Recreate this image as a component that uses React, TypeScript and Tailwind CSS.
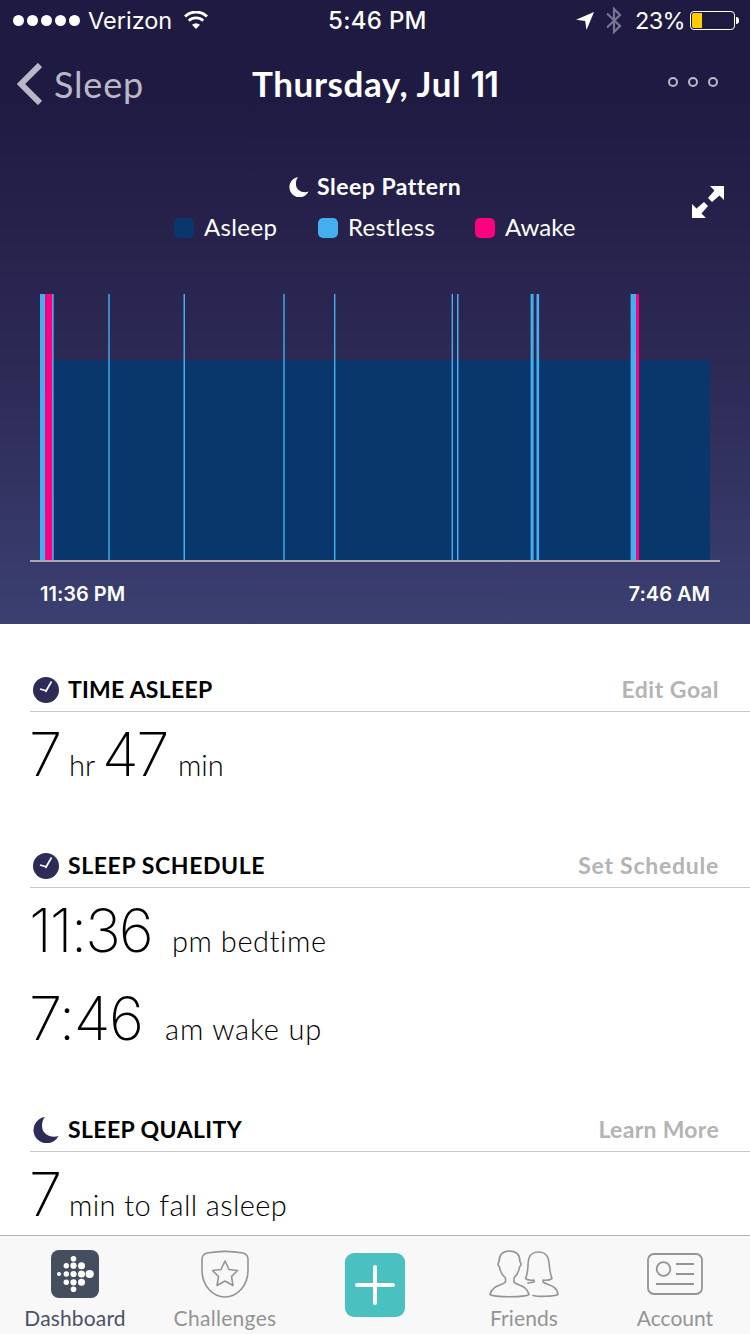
import type { ReactNode } from "react";
import clsx from "clsx";

type Bar = {
  x: number;
  width: number;
  state: "restless" | "awake";
};

const stateColors = {
  asleep: "#0a376b",
  restless: "#44aef0",
  awake: "#ff0080",
};

// Positions are relative to the left edge of the axis
const bars: Bar[] = [
  { x: 10, width: 5.2, state: "restless" },
  { x: 22, width: 1.7, state: "restless" },
  { x: 15.1, width: 7, state: "awake" },
  { x: 78.3, width: 1.4, state: "restless" },
  { x: 153.5, width: 1.5, state: "restless" },
  { x: 253.3, width: 1.4, state: "restless" },
  { x: 304, width: 1.4, state: "restless" },
  { x: 421.6, width: 1.4, state: "restless" },
  { x: 427, width: 1.5, state: "restless" },
  { x: 500.6, width: 3, state: "restless" },
  { x: 506.5, width: 2.6, state: "restless" },
  { x: 600.6, width: 5.5, state: "restless" },
  { x: 606, width: 3, state: "awake" },
];

const legend = [
  { label: "Asleep", swatch: "bg-[#0a376b]", text: "w-[72px] tracking-[0.35px]" },
  { label: "Restless", swatch: "bg-[#44aef0]", text: "w-[85px] tracking-[0.25px]" },
  { label: "Awake", swatch: "bg-[#ff0080]", text: "w-[71px]" },
];

const MoonIcon = ({ className }: { className?: string }) => (
  <svg viewBox="1 0 25 26" className={className} fill="currentColor">
    <path d="M12.500 0A13.200 13.200 0 1 0 26 19C18 21.500 9.500 17 9.500 9C9.500 5 10.500 2 12.500 0Z" />
  </svg>
);

const ClockIcon = () => (
  <svg viewBox="0 0 26 26" className="size-[26px] text-[#2d2b58]">
    <circle cx="13" cy="13" r="13" fill="currentColor" />
    <path d="M7 12L14 14M12.500 15L18.500 4.500" stroke="white" strokeWidth="1.700" fill="none" />
  </svg>
);

const StatusBar = () => (
  <div className="flex h-10 items-center pt-px pl-[13px] font-['Inter',sans-serif] text-[24px]">
    <div className="flex w-[67px] gap-[3px]">
      {[0, 1, 2, 3, 4].map((dot) => (
        <span key={dot} className="size-[11px] rounded-full bg-white" />
      ))}
    </div>
    <span className="ml-[8px] w-[86px] text-[23.500px]">Verizon</span>
    <svg viewBox="0 0 24 18" className="mb-px ml-[10px] h-[18px] w-6" fill="none" stroke="white">
      <path d="M1 5.500A16 16 0 0 1 23 5.500" strokeWidth="3" />
      <path d="M4.800 9.700A10.500 10.500 0 0 1 19.200 9.700" strokeWidth="2.700" />
      <path d="M12 18L8 13.800Q12 10.800 16 13.800Z" fill="white" stroke="none" />
    </svg>
    <span className="ml-[120px] w-[100px] font-medium tracking-[0.3px]">5:46 PM</span>
    <svg viewBox="0 0 18 18" className="ml-[148px] size-[18px]" fill="white">
      <path d="M18 0L10.500 18L9.200 9L0 7.700Z" />
    </svg>
    <svg viewBox="0 0 16 27" className="ml-3 h-[27px] w-4" fill="none" stroke="#787594" strokeWidth="2.200">
      <path d="M1 6.500L14 19L8 25V2L14 8L1 20.500" />
    </svg>
    <span className="ml-[13px] w-[50px] text-[23.500px] tracking-[-0.7px]">23%</span>
    <div className="ml-[5px] h-[19px] w-[45px] rounded-[4px] border border-white p-px">
      <div className="h-full w-[10px] rounded-l-[2px] bg-[#ffcc00]" />
    </div>
    <span className="ml-px h-[7px] w-[3px] rounded-r-full bg-white" />
  </div>
);

const NavBar = () => (
  <nav className="grid h-[88px] grid-cols-[1fr_250px_1fr] items-center">
    <div className="flex items-center text-[#bab7c7]">
      <svg viewBox="0 0 26 42" className="ml-[16px] h-[42px] w-[26px]" fill="none" stroke="currentColor" strokeWidth="6">
        <path d="M24 2L5 21L24 40" />
      </svg>
      <span className="ml-[12px] text-[36px] leading-[52px] tracking-[0.8px]">Sleep</span>
    </div>
    <h1 className="text-center text-[35px] font-bold tracking-[0.6px] whitespace-nowrap">
      Thursday, Jul <span className="font-['Inter',sans-serif] font-semibold tracking-[-1px]">11</span>
    </h1>
    <div className="mb-1 flex justify-end gap-[10px] pr-8">
      {[0, 1, 2].map((dot) => (
        <span key={dot} className="size-[10px] rounded-full border-2 border-[#bab7c7]" />
      ))}
    </div>
  </nav>
);

const SleepChart = () => (
  <svg viewBox="0 0 690 268" className="mx-[30px] h-[268px] w-[690px]">
    <rect x="24" y="66.300" width="656" height="199.700" fill={stateColors.asleep} />
    {bars.map((bar) => (
      <rect key={bar.x} x={bar.x} y="0" width={bar.width} height="266" fill={stateColors[bar.state]} />
    ))}
    <rect x="0" y="266" width="690" height="2" fill="#aaa8ae" />
  </svg>
);

const SleepPattern = () => (
  <div className="relative">
    <div className="flex h-[36px] items-center justify-center text-[23px] font-bold">
      <MoonIcon className="mt-px mr-2 size-5" />
      <span className="w-[144px] tracking-[0.5px] whitespace-nowrap">Sleep Pattern</span>
    </div>
    <div className="mt-[5px] flex h-[36px] items-center justify-center gap-[42px] text-[24px]">
      {legend.map((item) => (
        <div key={item.label} className="flex items-center gap-[10px]">
          <span className={clsx("mt-px size-5 rounded-[5px]", item.swatch)} />
          <span className={item.text}>{item.label}</span>
        </div>
      ))}
    </div>
    <svg viewBox="0 0 32 32" className="absolute top-[18px] left-[692px] size-8" fill="white">
      <path d="M18 0H32V14L27.500 9.500L20 16L16 12L22.500 4.500ZM14 32H0V18L4.500 22.500L12 16L16 20L9.500 27.500Z" />
    </svg>
  </div>
);

type SectionProps = {
  icon: ReactNode;
  title: string;
  titleClass: string;
  action: string;
  actionClass: string;
  children: ReactNode;
};

const Section = ({ icon, title, titleClass, action, actionClass, children }: SectionProps) => (
  <section className="mt-11">
    <div className="ml-[30px] flex h-11 items-center border-b border-[#c8c8c8] pr-[31px] pl-[3px] text-[23px] font-bold">
      {icon}
      <h2 className={clsx("ml-[9px]", titleClass)}>{title}</h2>
      <span className={clsx("ml-auto text-[#b4b4b4]", actionClass)}>{action}</span>
    </div>
    {children}
  </section>
);

const Value = ({ children }: { children: ReactNode }) => (
  <div className="flex h-[88px] items-baseline pl-[29px] leading-[84px] font-light whitespace-nowrap">
    {children}
  </div>
);

const Digits = ({ children, className }: { children: string; className?: string }) => (
  <span className={clsx("font-['Inter',sans-serif] text-[60px] font-[250]", className)}>{children}</span>
);

const Unit = ({ children, className }: { children: string; className?: string }) => (
  <span className={clsx("text-[29px]", className)}>{children}</span>
);

const DashboardIcon = () => (
  <svg viewBox="0 0 48 48" className="size-12">
    <rect width="48" height="48" rx="8" fill="#454e5f" />
    <g fill="white">
      <circle cx="8" cy="24" r="2" />
      <circle cx="15.300" cy="15.700" r="2.700" />
      <circle cx="15.300" cy="24" r="2.700" />
      <circle cx="15.300" cy="32.300" r="2.700" />
      <circle cx="22.500" cy="8.800" r="2.800" />
      <circle cx="22.500" cy="15.700" r="3.100" />
      <circle cx="22.500" cy="24" r="3.100" />
      <circle cx="22.500" cy="32.300" r="3.100" />
      <circle cx="22.500" cy="39.200" r="2.800" />
      <circle cx="30.500" cy="15.700" r="3.500" />
      <circle cx="30.500" cy="24" r="3.500" />
      <circle cx="30.500" cy="32.300" r="3.500" />
      <circle cx="38.700" cy="24" r="4.100" />
    </g>
  </svg>
);

const ChallengesIcon = () => (
  <svg viewBox="0 0 48 48" className="size-12" fill="none" stroke="currentColor" strokeWidth="1.600" strokeLinejoin="round">
    <path d="M6 3Q24 -.3 42 3Q46.500 4 47 9V20C47 36 36 47 24 47S1 36 1 20V9Q1.500 4 6 3Z" />
    <path d="M24 11L28 19.500L36.500 20.500L30.500 26.500L32 35.500L24 31L16 35.500L17.500 26.500L11.500 20.500L20 19.500Z" />
  </svg>
);

const FriendsIcon = () => (
  <svg viewBox="0 0 70 48" className="h-12 w-[70px]" fill="none" stroke="currentColor" strokeWidth="1.600" strokeLinejoin="round" strokeLinecap="round">
    <path d="M16.500 28C13 25 11 21 10.500 17C8.500 15 9 13 10 12C10 4 14 1 20.500 1S31 4 31 12C32 13 32.500 15 30.500 17C30 21 28 25 25 28V32C28 36 38 35 40 44.500C36 47.500 5 47.500 1 44.500C3 35 13 36 16.500 32Z" />
    <path d="M39 33L45 32V30C42 30.500 38.500 30 36.500 28.500C40 22 38 14 40 8C41.500 4 45 2 49.500 2S57.500 4 59 8C61 14 60 22 63 28.500C61 30 57 30.500 54 30V32C58 35 68 35 69 44.500C64 46.500 50 47 44 45.500" />
  </svg>
);

const AccountIcon = () => (
  <svg viewBox="0 0 56 42" className="h-[42px] w-14" fill="none" stroke="currentColor" strokeWidth="1.800">
    <rect x="1" y="1" width="54" height="40" rx="6" />
    <circle cx="16.500" cy="16" r="6.800" />
    <path d="M29 11H47M29 21H47M9 31H47" />
  </svg>
);

const tabs = [
  { label: "Dashboard", icon: <DashboardIcon />, color: "text-[#4b5166] tracking-[0.15px]" },
  { label: "Challenges", icon: <ChallengesIcon />, color: "text-[#949494] tracking-[0.3px]" },
  { label: "", icon: null, color: "" },
  { label: "Friends", icon: <FriendsIcon />, color: "text-[#949494] tracking-[0.1px] pr-[2px]" },
  { label: "Account", icon: <AccountIcon />, color: "text-[#949494]" },
];

const TabBar = () => (
  <footer className="grid h-[99px] grid-cols-5 border-t border-[#b2b2b2] bg-[#f8f8f8]">
    {tabs.map((tab) =>
      tab.label ? (
        <div key={tab.label} className={clsx("flex flex-col items-center pt-[14px]", tab.color)}>
          <div className="flex h-12 items-center">{tab.icon}</div>
          <span className="mt-[6px] text-[21px] leading-7">{tab.label}</span>
        </div>
      ) : (
        <div key="add" className="flex justify-center pt-[17px]">
          <svg viewBox="0 0 60 64" className="h-16 w-[60px]">
            <rect width="60" height="64" rx="9" fill="#4bc0c0" />
            <path d="M30 14V50M12 32H48" stroke="white" strokeWidth="4" strokeLinecap="round" />
          </svg>
        </div>
      )
    )}
  </footer>
);

export default function App() {
  return (
    <div className="flex h-[1334px] w-[750px] flex-col overflow-hidden bg-white font-['Lato',sans-serif] text-black [font-variant-ligatures:none]">
      <header className="h-[624px] shrink-0 bg-linear-to-b from-[#1f1a42] from-15% via-[#2d2a56] via-60% to-[#3b4071] text-white">
        <StatusBar />
        <NavBar />
        <div className="mt-10">
          <SleepPattern />
        </div>
        <div className="mt-[49px]">
          <SleepChart />
        </div>
        <div className="flex justify-between px-10 pt-[17px] font-['Inter',sans-serif] text-[20px] font-semibold">
          <span>11:36 PM</span>
          <span>7:46 AM</span>
        </div>
      </header>

      <main className="h-[611px] shrink-0 overflow-hidden">
        <Section
          icon={<ClockIcon />}
          title="TIME ASLEEP"
          titleClass="tracking-[0.25px]"
          action="Edit Goal"
          actionClass="tracking-[0.5px]"
        >
          <Value>
            <Digits className="w-[32px] tracking-[-2px]">7</Digits>
            <Unit className="ml-[8px] w-[33px]">hr</Unit>
            <Digits className="w-[68px] tracking-[-2.5px]">47</Digits>
            <Unit className="ml-[8px]">min</Unit>
          </Value>
        </Section>

        <Section
          icon={<ClockIcon />}
          title="SLEEP SCHEDULE"
          titleClass="tracking-[0.6px]"
          action="Set Schedule"
          actionClass="tracking-[0.75px]"
        >
          <Value>
            <Digits className="w-[125px] tracking-[-2px]">11:36</Digits>
            <Unit className="ml-[18px] tracking-[0.55px]">pm bedtime</Unit>
          </Value>
          <Value>
            <Digits className="w-[118px] tracking-[-1.5px]">7:46</Digits>
            <Unit className="ml-[18px] tracking-[0.85px]">am wake up</Unit>
          </Value>
        </Section>

        <Section
          icon={<MoonIcon className="size-[26px] text-[#2d2b58]" />}
          title="SLEEP QUALITY"
          titleClass="tracking-[0.4px]"
          action="Learn More"
          actionClass="tracking-[0.3px]"
        >
          <Value>
            <Digits className="w-[32px] tracking-[-2px]">7</Digits>
            <Unit className="ml-[8px] tracking-[0.4px]">min to fall asleep</Unit>
          </Value>
        </Section>
      </main>

      <TabBar />
    </div>
  );
}
